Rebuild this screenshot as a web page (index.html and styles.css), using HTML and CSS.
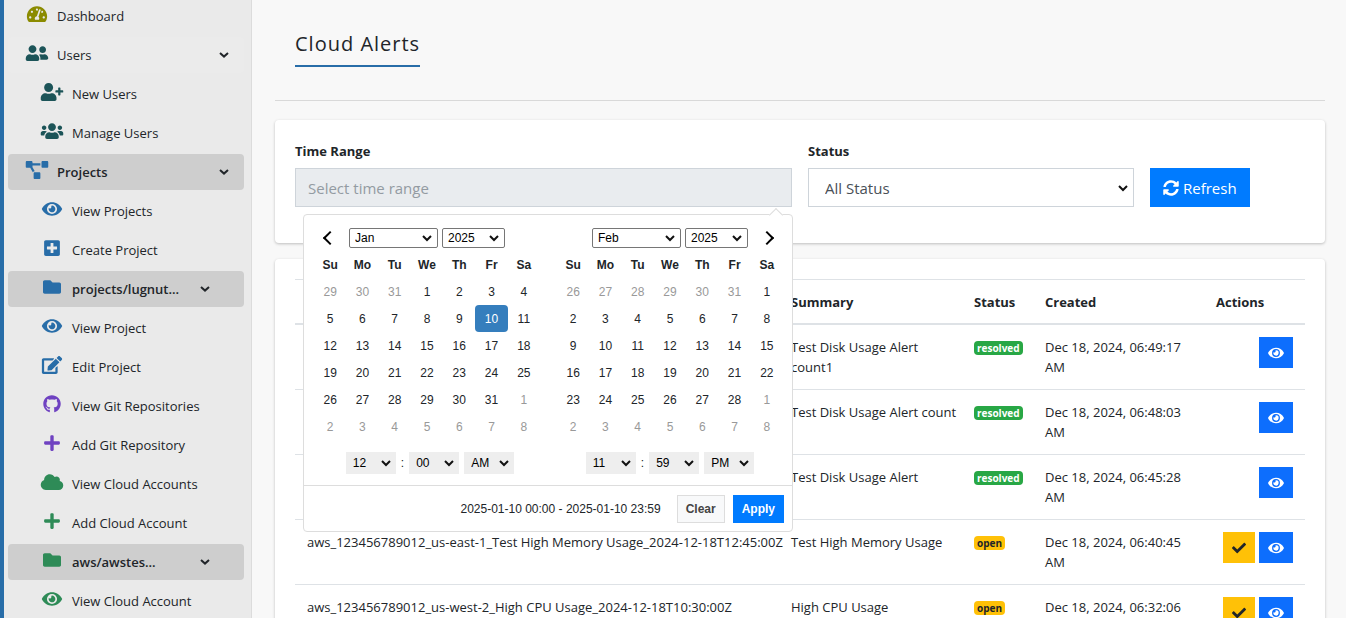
FILE: index.html
```html
<!DOCTYPE html>
<html lang="en">
<head>
  <meta charset="UTF-8" />
  <meta name="viewport" content="width=device-width, initial-scale=1.0"/>
  <title>Cloud Alerts</title>
  <link rel="stylesheet" href="styles.css">
</head>
<body>

  <!-- icon sprite -->
  <svg class="sprite" aria-hidden="true">
    <symbol id="i-dashboard" viewBox="0 0 576 512"><path d="M288 32C128.94 32 0 160.94 0 320c0 52.8 14.25 102.26 39.06 144.8 5.61 9.62 16.3 15.2 27.44 15.2h443c11.14 0 21.83-5.58 27.44-15.2C561.75 422.26 576 372.8 576 320c0-159.06-128.94-288-288-288zm0 64c14.71 0 26.58 10.13 30.32 23.65-1.11 2.26-2.64 4.23-3.45 6.67l-9.22 27.67c-5.13 3.49-10.97 6.01-17.64 6.01-17.67 0-32-14.33-32-32S270.33 96 288 96zM96 384c-17.67 0-32-14.33-32-32s14.33-32 32-32 32 14.33 32 32-14.33 32-32 32zm48-160c-17.67 0-32-14.33-32-32s14.33-32 32-32 32 14.33 32 32-14.33 32-32 32zm246.77-72.41l-61.33 184C343.13 347.33 352 364.54 352 384c0 11.72-3.38 22.55-8.88 32H232.88c-5.5-9.45-8.88-20.28-8.88-32 0-33.94 26.5-61.43 59.9-63.59l61.34-184.01c4.17-12.56 17.73-19.45 30.36-15.17 12.57 4.19 19.35 17.79 15.17 30.36zm14.66 57.2l15.52-46.55c3.47-1.29 7.13-2.23 11.05-2.23 17.67 0 32 14.33 32 32s-14.33 32-32 32c-11.38-.01-20.89-6.28-26.57-15.22zM480 384c-17.67 0-32-14.33-32-32s14.33-32 32-32 32 14.33 32 32-14.33 32-32 32z"/></symbol>
    <symbol id="i-friends" viewBox="0 0 640 512"><path d="M192 256c61.9 0 112-50.1 112-112S253.9 32 192 32 80 82.1 80 144s50.1 112 112 112zm76.8 32h-8.3c-20.8 10-43.9 16-68.5 16s-47.6-6-68.5-16h-8.3C51.6 288 0 339.6 0 403.2V432c0 26.5 21.5 48 48 48h288c26.5 0 48-21.5 48-48v-28.8c0-63.6-51.6-115.2-115.2-115.2zM480 256c53 0 96-43 96-96s-43-96-96-96-96 43-96 96 43 96 96 96zm48 32h-3.8c-13.9 4.8-28.6 8-44.2 8s-30.3-3.2-44.2-8H432c-20.4 0-39.2 5.9-55.7 15.4 24.4 26.3 39.7 61.2 39.7 99.8v38.4c0 2.2-.5 4.3-.6 6.4H592c26.5 0 48-21.5 48-48 0-61.9-50.1-112-112-112z"/></symbol>
    <symbol id="i-user-plus" viewBox="0 0 640 512"><path d="M624 208h-64v-64c0-8.8-7.2-16-16-16h-32c-8.8 0-16 7.2-16 16v64h-64c-8.8 0-16 7.2-16 16v32c0 8.8 7.2 16 16 16h64v64c0 8.8 7.2 16 16 16h32c8.8 0 16-7.2 16-16v-64h64c8.8 0 16-7.2 16-16v-32c0-8.8-7.2-16-16-16zm-400 48c70.7 0 128-57.3 128-128S294.7 0 224 0 96 57.3 96 128s57.3 128 128 128zm89.6 32h-16.7c-22.2 10.2-46.9 16-72.9 16s-50.6-5.8-72.9-16h-16.7C60.2 288 0 348.2 0 422.4V464c0 26.5 21.5 48 48 48h352c26.5 0 48-21.5 48-48v-41.6c0-74.2-60.2-134.4-134.4-134.4z"/></symbol>
    <symbol id="i-users" viewBox="0 0 640 512"><path d="M96 224c35.3 0 64-28.7 64-64s-28.7-64-64-64-64 28.7-64 64 28.7 64 64 64zm448 0c35.3 0 64-28.7 64-64s-28.7-64-64-64-64 28.7-64 64 28.7 64 64 64zm32 32h-64c-17.6 0-33.5 7.1-45.1 18.6 40.3 22.1 68.9 62 75.1 109.4h66c17.7 0 32-14.3 32-32v-32c0-35.3-28.7-64-64-64zm-256 0c61.9 0 112-50.1 112-112S381.9 32 320 32 208 82.1 208 144s50.1 112 112 112zm76.8 32h-8.3c-20.8 10-43.9 16-68.5 16s-47.6-6-68.5-16h-8.3C179.6 288 128 339.6 128 403.2V432c0 26.5 21.5 48 48 48h288c26.5 0 48-21.5 48-48v-28.8c0-63.6-51.6-115.2-115.2-115.2zm-223.7-13.4C161.5 263.1 145.6 256 128 256H64c-35.3 0-64 28.7-64 64v32c0 17.7 14.3 32 32 32h65.9c6.3-47.4 34.9-87.3 75.2-109.4z"/></symbol>
    <symbol id="i-diagram" viewBox="0 0 640 512"><path d="M384 320H256c-17.67 0-32 14.33-32 32v128c0 17.67 14.33 32 32 32h128c17.67 0 32-14.33 32-32V352c0-17.67-14.33-32-32-32zM192 32c0-17.67-14.33-32-32-32H32C14.33 0 0 14.33 0 32v128c0 17.67 14.33 32 32 32h95.72l73.16 128.04C211.98 300.98 232.4 288 256 288h.28L192 175.51V128h224V64H192V32zM608 0H480c-17.67 0-32 14.33-32 32v128c0 17.67 14.33 32 32 32h128c17.67 0 32-14.33 32-32V32c0-17.67-14.33-32-32-32z"/></symbol>
    <symbol id="i-eye" viewBox="0 0 576 512"><path d="M572.52 241.4C518.29 135.59 410.93 64 288 64S57.68 135.64 3.48 241.41a32.35 32.35 0 0 0 0 29.19C57.71 376.41 165.07 448 288 448s230.32-71.64 284.52-177.41a32.35 32.35 0 0 0 0-29.19zM288 400a144 144 0 1 1 144-144 143.93 143.93 0 0 1-144 144zm0-240a95.31 95.31 0 0 0-25.31 3.79 47.85 47.85 0 0 1-66.9 66.9A95.78 95.78 0 1 0 288 160z"/></symbol>
    <symbol id="i-plus-square" viewBox="0 0 448 512"><path d="M400 32H48C21.5 32 0 53.5 0 80v352c0 26.5 21.5 48 48 48h352c26.5 0 48-21.5 48-48V80c0-26.5-21.5-48-48-48zm-32 252c0 6.6-5.4 12-12 12h-92v92c0 6.6-5.4 12-12 12h-56c-6.6 0-12-5.4-12-12v-92H92c-6.6 0-12-5.4-12-12v-56c0-6.6 5.4-12 12-12h92v-92c0-6.6 5.4-12 12-12h56c6.6 0 12 5.4 12 12v92h92c6.6 0 12 5.4 12 12v56z"/></symbol>
    <symbol id="i-folder" viewBox="0 0 512 512"><path d="M464 128H272l-64-64H48C21.49 64 0 85.49 0 112v288c0 26.51 21.49 48 48 48h416c26.51 0 48-21.49 48-48V176c0-26.51-21.49-48-48-48z"/></symbol>
    <symbol id="i-edit" viewBox="0 0 576 512"><path d="M402.6 83.2l90.2 90.2c3.8 3.8 3.8 10 0 13.8L274.4 405.6l-92.8 10.3c-12.4 1.4-22.9-9.1-21.5-21.5l10.3-92.8L388.8 83.2c3.8-3.8 10-3.8 13.8 0zm162-22.9l-48.8-48.8c-15.2-15.2-39.9-15.2-55.2 0l-35.4 35.4c-3.8 3.8-3.8 10 0 13.8l90.2 90.2c3.8 3.8 10 3.8 13.8 0l35.4-35.4c15.2-15.3 15.2-40 0-55.2zM384 346.2V448H64V128h229.8c3.2 0 6.2-1.3 8.5-3.5l40-40c7.6-7.6 2.2-20.5-8.5-20.5H48C21.5 64 0 85.5 0 112v352c0 26.5 21.5 48 48 48h352c26.5 0 48-21.5 48-48V306.2c0-10.7-12.9-16-20.5-8.5l-40 40c-2.2 2.3-3.5 5.3-3.5 8.5z"/></symbol>
    <symbol id="i-github" viewBox="0 0 496 512"><path d="M244.8 8C106.1 8 0 113.3 0 252c0 110.9 69.8 205.8 169.5 239.2 12.8 2.3 17.3-5.6 17.3-12.1 0-6.2-.3-40.4-.3-61.4 0 0-70 15-84.7-29.8 0 0-11.4-29.1-27.8-36.6 0 0-22.9-15.7 1.6-15.4 0 0 24.9 2 38.6 25.8 21.9 38.6 58.6 27.5 72.9 20.9 2.3-16 8.8-27.1 16-33.7-55.9-6.2-112.3-14.3-112.3-110.5 0-27.5 7.6-41.3 23.6-58.9-2.6-6.5-11.1-33.3 2.6-67.9 20.9-6.5 69 27 69 27 20-5.6 41.5-8.5 62.8-8.5s42.8 2.9 62.8 8.5c0 0 48.1-33.6 69-27 13.7 34.7 5.2 61.4 2.6 67.9 16 17.7 25.8 31.5 25.8 58.9 0 96.5-58.9 104.2-114.8 110.5 9.2 7.9 17 22.9 17 46.4 0 33.7-.3 75.4-.3 83.6 0 6.5 4.6 14.4 17.3 12.1C428.2 457.8 496 362.9 496 252 496 113.3 383.5 8 244.8 8z"/></symbol>
    <symbol id="i-plus" viewBox="0 0 448 512"><path d="M416 208H272V64c0-17.67-14.33-32-32-32h-32c-17.67 0-32 14.33-32 32v144H32c-17.67 0-32 14.33-32 32v32c0 17.67 14.33 32 32 32h144v144c0 17.67 14.33 32 32 32h32c17.67 0 32-14.33 32-32V304h144c17.67 0 32-14.33 32-32v-32c0-17.67-14.33-32-32-32z"/></symbol>
    <symbol id="i-cloud" viewBox="0 0 640 512"><path d="M537.6 226.6c4.1-10.7 6.4-22.4 6.4-34.6 0-53-43-96-96-96-19.7 0-38.1 6-53.3 16.2C367 64.2 315.3 32 256 32c-88.4 0-160 71.6-160 160 0 2.7.1 5.4.2 8.1C40.2 219.8 0 273.2 0 336c0 79.5 64.5 144 144 144h368c70.7 0 128-57.3 128-128 0-61.9-44-113.6-102.4-125.4z"/></symbol>
    <symbol id="i-sync" viewBox="0 0 512 512"><path d="M370.72 133.28C339.458 104.008 298.888 87.962 255.848 88c-77.458.068-144.328 53.178-162.791 126.85-1.344 5.363-6.122 9.15-11.651 9.15H24.103c-7.498 0-13.194-6.807-11.807-14.176C33.933 94.924 134.813 8 256 8c66.448 0 126.791 26.136 171.315 68.685L463.03 40.97C478.149 25.851 504 36.559 504 57.941V192c0 13.255-10.745 24-24 24H345.941c-21.382 0-32.09-25.851-16.971-40.971l41.75-41.749zM32 296h134.059c21.382 0 32.09 25.851 16.971 40.971l-41.75 41.75c31.262 29.273 71.835 45.319 114.876 45.28 77.418-.07 144.315-53.144 162.787-126.849 1.344-5.363 6.122-9.15 11.651-9.15h57.304c7.498 0 13.194 6.807 11.807 14.176C478.067 417.076 377.187 504 256 504c-66.448 0-126.791-26.136-171.315-68.685L48.97 471.03C33.851 486.149 8 475.441 8 454.059V320c0-13.255 10.745-24 24-24z"/></symbol>
    <symbol id="i-check" viewBox="0 0 512 512"><path d="M173.898 439.404l-166.4-166.4c-9.997-9.997-9.997-26.206 0-36.204l36.203-36.204c9.997-9.998 26.207-9.998 36.204 0L192 312.69 432.095 72.596c9.997-9.997 26.207-9.997 36.204 0l36.203 36.204c9.997 9.997 9.997 26.206 0 36.204l-294.4 294.401c-9.998 9.997-26.207 9.997-36.204-.001z"/></symbol>
    <symbol id="i-chevron" viewBox="0 0 10 10"><path d="M1 3l4 3.6L9 3" fill="none" stroke="currentColor" stroke-width="2"/></symbol>
  </svg>

  <aside class="sidebar">
    <nav>
      <a href="#" class="item"><svg class="icon olive"><use href="#i-dashboard"/></svg><span>Dashboard</span></a>
      <a href="#" class="item hovered"><svg class="icon teal"><use href="#i-friends"/></svg><span>Users</span><svg class="chevron"><use href="#i-chevron"/></svg></a>
      <a href="#" class="item sub"><svg class="icon teal"><use href="#i-user-plus"/></svg><span>New Users</span></a>
      <a href="#" class="item sub"><svg class="icon teal"><use href="#i-users"/></svg><span>Manage Users</span></a>
      <a href="#" class="item open"><svg class="icon blue"><use href="#i-diagram"/></svg><span>Projects</span><svg class="chevron"><use href="#i-chevron"/></svg></a>
      <a href="#" class="item sub"><svg class="icon blue"><use href="#i-eye"/></svg><span>View Projects</span></a>
      <a href="#" class="item sub"><svg class="icon blue"><use href="#i-plus-square"/></svg><span>Create Project</span></a>
      <a href="#" class="item sub open"><svg class="icon blue"><use href="#i-folder"/></svg><span>projects/lugnut...</span><svg class="chevron"><use href="#i-chevron"/></svg></a>
      <a href="#" class="item sub"><svg class="icon blue"><use href="#i-eye"/></svg><span>View Project</span></a>
      <a href="#" class="item sub"><svg class="icon blue"><use href="#i-edit"/></svg><span>Edit Project</span></a>
      <a href="#" class="item sub"><svg class="icon purple"><use href="#i-github"/></svg><span>View Git Repositories</span></a>
      <a href="#" class="item sub"><svg class="icon purple"><use href="#i-plus"/></svg><span>Add Git Repository</span></a>
      <a href="#" class="item sub"><svg class="icon green"><use href="#i-cloud"/></svg><span>View Cloud Accounts</span></a>
      <a href="#" class="item sub"><svg class="icon green"><use href="#i-plus"/></svg><span>Add Cloud Account</span></a>
      <a href="#" class="item sub open"><svg class="icon green"><use href="#i-folder"/></svg><span>aws/awstes...</span><svg class="chevron"><use href="#i-chevron"/></svg></a>
      <a href="#" class="item sub"><svg class="icon green"><use href="#i-eye"/></svg><span>View Cloud Account</span></a>
    </nav>
  </aside>

  <main>
    <header class="page-header">
      <h1>Cloud Alerts</h1>
    </header>

    <section class="card filters">
      <div class="field range-field">
        <label for="time-range">Time Range</label>
        <input type="text" id="time-range" class="form-control" placeholder="Select time range" readonly />

        <div class="picker">
          <div class="calendars">
            <div class="calendar left">
              <table id="cal-left">
                <thead>
                  <tr>
                    <th><button type="button" class="arrow prev" aria-label="Previous month"></button></th>
                    <th colspan="5">
                      <div class="month-year">
                        <select class="month" aria-label="Start month"><option>Jan</option></select>
                        <select class="year" aria-label="Start year"><option>2025</option></select>
                      </div>
                    </th>
                    <th></th>
                  </tr>
                  <tr><th>Su</th><th>Mo</th><th>Tu</th><th>We</th><th>Th</th><th>Fr</th><th>Sa</th></tr>
                </thead>
                <tbody></tbody>
              </table>
              <div class="time">
                <select aria-label="Start hour"><option>12</option></select>
                <span>:</span>
                <select aria-label="Start minute"><option>00</option></select>
                <select aria-label="Start AM/PM"><option>AM</option></select>
              </div>
            </div>
            <div class="calendar right">
              <table id="cal-right">
                <thead>
                  <tr>
                    <th></th>
                    <th colspan="5">
                      <div class="month-year">
                        <select class="month" aria-label="End month"><option>Feb</option></select>
                        <select class="year" aria-label="End year"><option>2025</option></select>
                      </div>
                    </th>
                    <th><button type="button" class="arrow next" aria-label="Next month"></button></th>
                  </tr>
                  <tr><th>Su</th><th>Mo</th><th>Tu</th><th>We</th><th>Th</th><th>Fr</th><th>Sa</th></tr>
                </thead>
                <tbody></tbody>
              </table>
              <div class="time">
                <select aria-label="End hour"><option>11</option></select>
                <span>:</span>
                <select aria-label="End minute"><option>59</option></select>
                <select aria-label="End AM/PM"><option>PM</option></select>
              </div>
            </div>
          </div>
          <div class="picker-footer">
            <span>2025-01-10 00:00 - 2025-01-10 23:59</span>
            <button type="button" class="btn-small clear">Clear</button>
            <button type="button" class="btn-small apply">Apply</button>
          </div>
        </div>
      </div>

      <div class="field status-field">
        <label for="status">Status</label>
        <select id="status" class="form-control">
          <option>All Status</option>
          <option>open</option>
          <option>resolved</option>
        </select>
      </div>

      <button type="button" class="refresh"><svg><use href="#i-sync"/></svg>Refresh</button>
    </section>

    <section class="card">
      <table class="alerts">
        <colgroup>
          <col class="c-name"><col class="c-summary"><col class="c-status"><col class="c-created"><col class="c-actions">
        </colgroup>
        <thead>
          <tr><th></th><th>Summary</th><th>Status</th><th>Created</th><th>Actions</th></tr>
        </thead>
        <tbody>
          <tr>
            <td></td>
            <td class="summary">Test Disk Usage Alert count1</td>
            <td><span class="badge resolved">resolved</span></td>
            <td>Dec 18, 2024, 06:49:17 AM</td>
            <td><div class="actions"><button class="act view" aria-label="View"><svg><use href="#i-eye"/></svg></button></div></td>
          </tr>
          <tr>
            <td></td>
            <td class="summary">Test Disk Usage Alert count</td>
            <td><span class="badge resolved">resolved</span></td>
            <td>Dec 18, 2024, 06:48:03 AM</td>
            <td><div class="actions"><button class="act view" aria-label="View"><svg><use href="#i-eye"/></svg></button></div></td>
          </tr>
          <tr>
            <td></td>
            <td class="summary">Test Disk Usage Alert</td>
            <td><span class="badge resolved">resolved</span></td>
            <td>Dec 18, 2024, 06:45:28 AM</td>
            <td><div class="actions"><button class="act view" aria-label="View"><svg><use href="#i-eye"/></svg></button></div></td>
          </tr>
          <tr>
            <td class="name">aws_123456789012_us-east-1_Test High Memory Usage_2024-12-18T12:45:00Z</td>
            <td class="summary">Test High Memory Usage</td>
            <td><span class="badge pending">open</span></td>
            <td>Dec 18, 2024, 06:40:45 AM</td>
            <td><div class="actions"><button class="act ack" aria-label="Resolve"><svg><use href="#i-check"/></svg></button><button class="act view" aria-label="View"><svg><use href="#i-eye"/></svg></button></div></td>
          </tr>
          <tr>
            <td class="name">aws_123456789012_us-west-2_High CPU Usage_2024-12-18T10:30:00Z</td>
            <td class="summary">High CPU Usage</td>
            <td><span class="badge pending">open</span></td>
            <td>Dec 18, 2024, 06:32:06</td>
            <td><div class="actions"><button class="act ack" aria-label="Resolve"><svg><use href="#i-check"/></svg></button><button class="act view" aria-label="View"><svg><use href="#i-eye"/></svg></button></div></td>
          </tr>
        </tbody>
      </table>
    </section>
  </main>

  <script>
    // fill six weeks of days, the first row always shows the month before
    function fillCalendar(id, year, month, selected) {
      const body = document.querySelector("#" + id + " tbody");
      const first = new Date(year, month, 1).getDay();
      let day = 1 - (first === 0 ? 7 : first);
      for (let w = 0; w < 6; w++) {
        const tr = document.createElement("tr");
        for (let d = 0; d < 7; d++, day++) {
          const date = new Date(year, month, day);
          const td = document.createElement("td");
          td.textContent = date.getDate();
          if (date.getMonth() !== month) td.className = "off";
          else if (date.getDate() === selected) td.className = "selected";
          tr.appendChild(td);
        }
        body.appendChild(tr);
      }
    }

    fillCalendar("cal-left", 2025, 0, 10);
    fillCalendar("cal-right", 2025, 1, null);
  </script>
</body>
</html>
```
FILE: styles.css
```css
* {
  box-sizing: border-box;
}

body {
  margin: 0;
  height: 100vh;
  overflow: hidden;
  display: flex;
  font-family: 'Segoe UI', 'Open Sans', 'Noto Sans', sans-serif;
  font-size: 13px;
  line-height: 20px;
  color: #212529;
  background: #f8f8f8;
}

.sprite {
  display: none;
}

svg {
  fill: currentColor;
}

select {
  appearance: none;
  background: #fff url("data:image/svg+xml,%3Csvg xmlns='http://www.w3.org/2000/svg' viewBox='0 0 10 10'%3E%3Cpath d='M1 3l4 4 4-4' fill='none' stroke='%23111' stroke-width='2'/%3E%3C/svg%3E") no-repeat right 5px center / 10px 10px;
}

/* sidebar */
.sidebar {
  flex: 0 0 252px;
  background: #eaeaea;
  border-left: 4px solid #286da8;
  border-right: 1px solid #dcdcdc;
  padding: 0 7px 0 4px;
}

.sidebar nav {
  display: flex;
  flex-direction: column;
  gap: 3px;
  margin-top: -2px;
}

.item {
  display: flex;
  align-items: center;
  gap: 8px;
  height: 36px;
  flex-shrink: 0;
  padding: 0 15px 0 17px;
  border-radius: 4px;
  color: #212529;
  text-decoration: none;
}

.item.sub {
  padding: 0 34px 0 32px;
}

.item.hovered {
  background: #ebebeb;
}

.item.open {
  background: #cecece;
  font-weight: 600;
}

.icon {
  width: 24px;
  height: 18px;
  margin-bottom: 4px;
}

.chevron {
  width: 10px;
  height: 10px;
  margin-left: auto;
}

.olive { color: #8b8b00; }
.teal { color: #1c5458; }
.blue { color: #286da8; }
.purple { color: #6f42c1; }
.green { color: #2e8b57; }

/* page */
main {
  flex: 1;
  min-width: 0;
  padding: 0 21px 0 23px;
}

.page-header {
  padding: 25px 20px 33px;
  margin-bottom: 19px;
  border-bottom: 1px solid #d9d9d9;
}

h1 {
  display: inline-block;
  vertical-align: top;
  margin: 0;
  padding-bottom: 2px;
  font-size: 20px;
  font-weight: 400;
  line-height: 38px;
  letter-spacing: 1px;
  border-bottom: 2px solid #286da8;
}

.card {
  background: #fff;
  border-radius: 4px;
  padding: 20px;
  margin-bottom: 16px;
  box-shadow: 0 1px 3px rgba(0,0,0,0.24);
}

.filters {
  display: grid;
  grid-template-columns: repeat(12, 1fr);
  gap: 16px;
  align-items: end;
  padding-bottom: 36px;
}

.field {
  display: flex;
  flex-direction: column;
  gap: 6px;
}

.range-field {
  position: relative;
  grid-column: span 6;
}

.status-field {
  grid-column: span 4;
}

label {
  font-weight: 700;
  line-height: 22px;
}

.form-control {
  width: 100%;
  height: 39px;
  padding: 0 12px;
  border: 1px solid #ced4da;
  border-radius: 0;
  font-family: inherit;
  font-size: 15px;
  color: #495057;
}

select.form-control {
  padding: 0 16px;
}

.form-control[readonly] {
  background: #e9ecef;
  outline: none;
}

.form-control::placeholder {
  color: #939ba2;
}

.refresh {
  display: flex;
  align-items: center;
  gap: 4px;
  grid-column: span 2;
  justify-self: start;
  height: 39px;
  padding: 0 13px;
  border: none;
  font-family: inherit;
  font-size: 15px;
  color: #fff;
  background: #007bff;
}

.refresh svg {
  width: 16px;
  height: 16px;
}

/* date range picker */
.picker {
  position: absolute;
  top: 100%;
  right: -1px;
  z-index: 10;
  width: 490px;
  margin-top: 7px;
  font-family: Arial, 'Liberation Sans', sans-serif;
  font-size: 12px;
  background: #fff;
  border: 1px solid #ddd;
  border-radius: 4px;
}

/* caret, a rotated square over the top border */
.picker::before {
  content: "";
  position: absolute;
  top: -5px;
  right: 11px;
  width: 9px;
  height: 9px;
  background: #fff;
  border: 1px solid #ddd;
  border-right: none;
  border-bottom: none;
  transform: rotate(45deg);
}

.calendars {
  display: flex;
  justify-content: space-between;
  padding: 9px 9px 11px 10px;
}

.calendar.left {
  width: 232px;
}

.calendar table {
  width: 226px;
  table-layout: fixed;
  border-collapse: collapse;
}

.calendar tr {
  height: 27px;
}

.calendar th,
.calendar td {
  padding: 0;
  text-align: center;
  line-height: 20px;
  border-radius: 4px;
}

.calendar td.off {
  color: #999;
}

.calendar td.selected {
  color: #fff;
  background: #357ebd;
}

.calendar select {
  font-family: inherit;
  font-size: 12px;
  color: #000;
}

.month-year {
  display: flex;
  justify-content: center;
  gap: 4px;
}

.month,
.year {
  height: 20px;
  padding: 0 5px;
  border: 1px solid #767676;
  border-radius: 2px;
}

.month {
  width: 89px;
}

.year {
  width: 63px;
}

.arrow {
  display: flex;
  align-items: center;
  justify-content: center;
  width: 20px;
  height: 20px;
  margin: 0 auto;
  padding: 0;
  border: none;
  background: none;
}

.arrow::after {
  content: "";
  width: 8px;
  height: 8px;
  border: solid #000;
  border-width: 0 2px 2px 0;
}

.prev::after {
  transform: rotate(135deg);
}

.next::after {
  transform: rotate(-45deg);
}

.time {
  display: flex;
  justify-content: center;
  gap: 5px;
  margin-top: 12px;
  line-height: 22px;
}

.time select {
  width: 50px;
  height: 22px;
  padding: 0 7px;
  border: none;
  border-radius: 0;
  background-color: #eee;
}

.picker-footer {
  display: flex;
  justify-content: flex-end;
  align-items: center;
  gap: 8px;
  padding: 9px 8px 8px;
  border-top: 1px solid #ddd;
}

.picker-footer span {
  margin-right: 8px;
}

.btn-small {
  height: 28px;
  padding: 0 8px;
  border: 1px solid #007bff;
  font-family: inherit;
  font-size: 12px;
  font-weight: 700;
}

.clear {
  color: #444;
  background: #f8f9fa;
  border-color: #ddd;
}

.apply {
  color: #fff;
  background: #007bff;
}

/* alerts table */
.alerts {
  width: 100%;
  table-layout: fixed;
  border-collapse: collapse;
}

.c-summary { width: 183px; }
.c-status { width: 71px; }
.c-created { width: 171px; }
.c-actions { width: 101px; }

.alerts th,
.alerts td {
  padding: 12px;
  text-align: left;
  vertical-align: top;
  border-top: 1px solid #dee2e6;
}

.alerts th {
  font-weight: 700;
  padding-bottom: 11px;
  border-bottom: 2px solid #dee2e6;
}

.alerts .name {
  white-space: nowrap;
}

.alerts .summary {
  padding-right: 4px;
}

.badge {
  display: inline-block;
  padding: 2px 3px;
  border-radius: 4px;
  font-size: 10px;
  font-weight: 700;
  line-height: 10px;
}

.resolved {
  color: #fff;
  background: #28a745;
}

.pending {
  background: #ffc107;
}

.actions {
  display: flex;
  justify-content: flex-end;
  gap: 4px;
}

.act {
  display: flex;
  align-items: center;
  height: 31px;
  padding: 0 9px;
  border: none;
}

.act svg {
  width: 16px;
  height: 14px;
}

.view {
  color: #fff;
  background: #0d6efd;
}

.ack {
  color: #212529;
  background: #ffc107;
}

.ack svg {
  width: 14px;
}
```
